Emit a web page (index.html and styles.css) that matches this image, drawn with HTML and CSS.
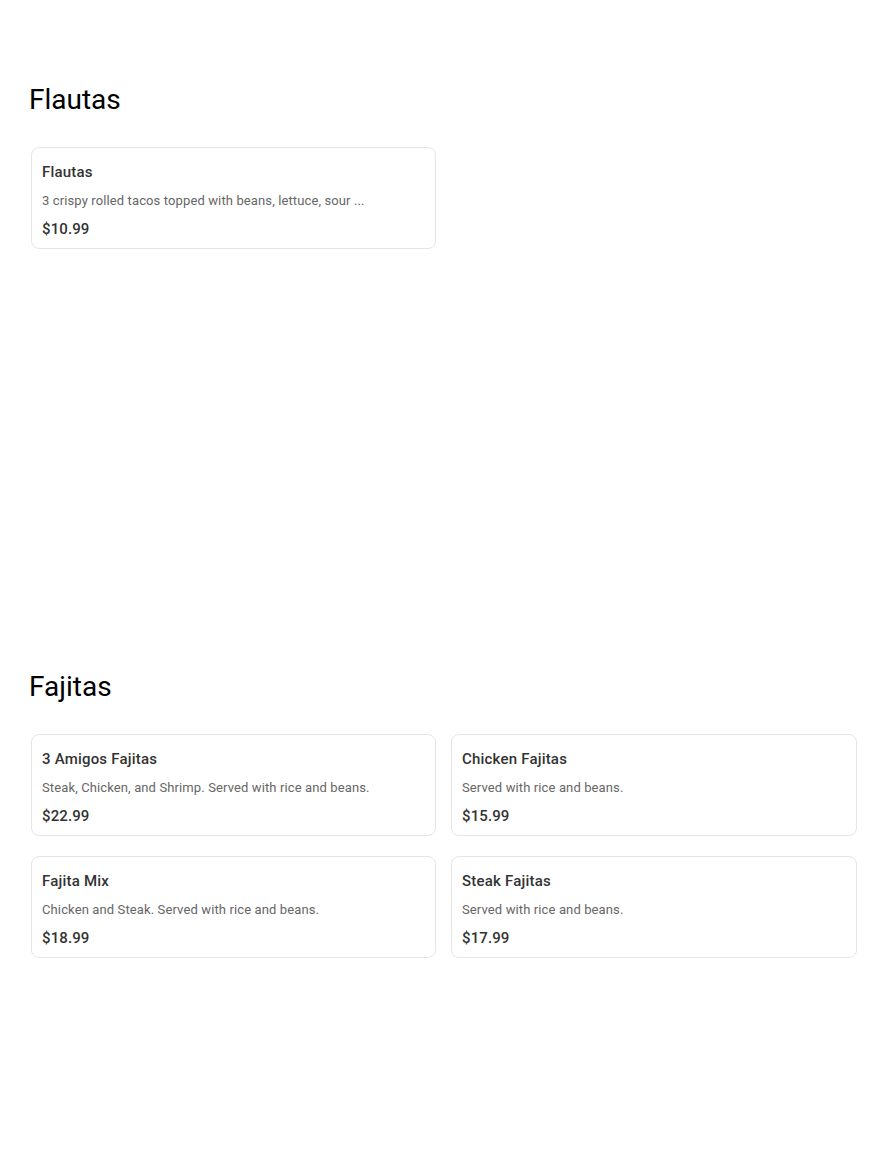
FILE: index.html
```html
<!DOCTYPE html>
<html>
<head>
<meta charset="utf-8">
<link rel="stylesheet" href="styles.css">
</head>
<body>
<main class="menu">
  <section class="category category-first">
    <h2 class="category-title">Flautas</h2>
    <div class="items">
      <div class="item">
        <div class="item-name">Flautas</div>
        <div class="item-desc">3 crispy rolled tacos topped with beans, lettuce, sour ...</div>
        <div class="item-price">$10.99</div>
      </div>
    </div>
  </section>
  <section class="category">
    <h2 class="category-title">Fajitas</h2>
    <div class="items">
      <div class="item">
        <div class="item-name">3 Amigos Fajitas</div>
        <div class="item-desc">Steak, Chicken, and Shrimp. Served with rice and beans.</div>
        <div class="item-price">$22.99</div>
      </div>
      <div class="item">
        <div class="item-name">Chicken Fajitas</div>
        <div class="item-desc">Served with rice and beans.</div>
        <div class="item-price">$15.99</div>
      </div>
      <div class="item">
        <div class="item-name">Fajita Mix</div>
        <div class="item-desc">Chicken and Steak. Served with rice and beans.</div>
        <div class="item-price">$18.99</div>
      </div>
      <div class="item">
        <div class="item-name">Steak Fajitas</div>
        <div class="item-desc">Served with rice and beans.</div>
        <div class="item-price">$17.99</div>
      </div>
    </div>
  </section>
</main>
</body>
</html>
```

FILE: styles.css
```css
html, body {
  margin: 0;
  padding: 0;
  background: #ffffff;
}
body {
  font-family: Roboto, "Liberation Sans", Arial, sans-serif;
  color: #000;
}
.menu {
  padding: 83px 33px 0 31px;
}
.category-first {
  min-height: 587px;
}
.category-title {
  margin: 0 0 30px -2px;
  font-size: 28px;
  font-weight: 400;
  line-height: 34px;
  color: #000;
}
.items {
  display: grid;
  grid-template-columns: 405px 406px;
  column-gap: 15px;
  row-gap: 20px;
}
.item {
  border: 1px solid #e6e6e6;
  border-radius: 8px;
  padding: 14px 10px 9px;
  display: flex;
  flex-direction: column;
}
.item-name {
  font-size: 15px;
  font-weight: 500;
  line-height: 20px;
  letter-spacing: 0.2px;
  color: #333;
}
.item-desc {
  margin-top: 10px;
  font-size: 13px;
  line-height: 18px;
  letter-spacing: 0.12px;
  color: #666;
}
.item-price {
  margin-top: 9px;
  font-size: 15px;
  font-weight: 500;
  line-height: 20px;
  letter-spacing: 0.1px;
  color: #333;
}
```
